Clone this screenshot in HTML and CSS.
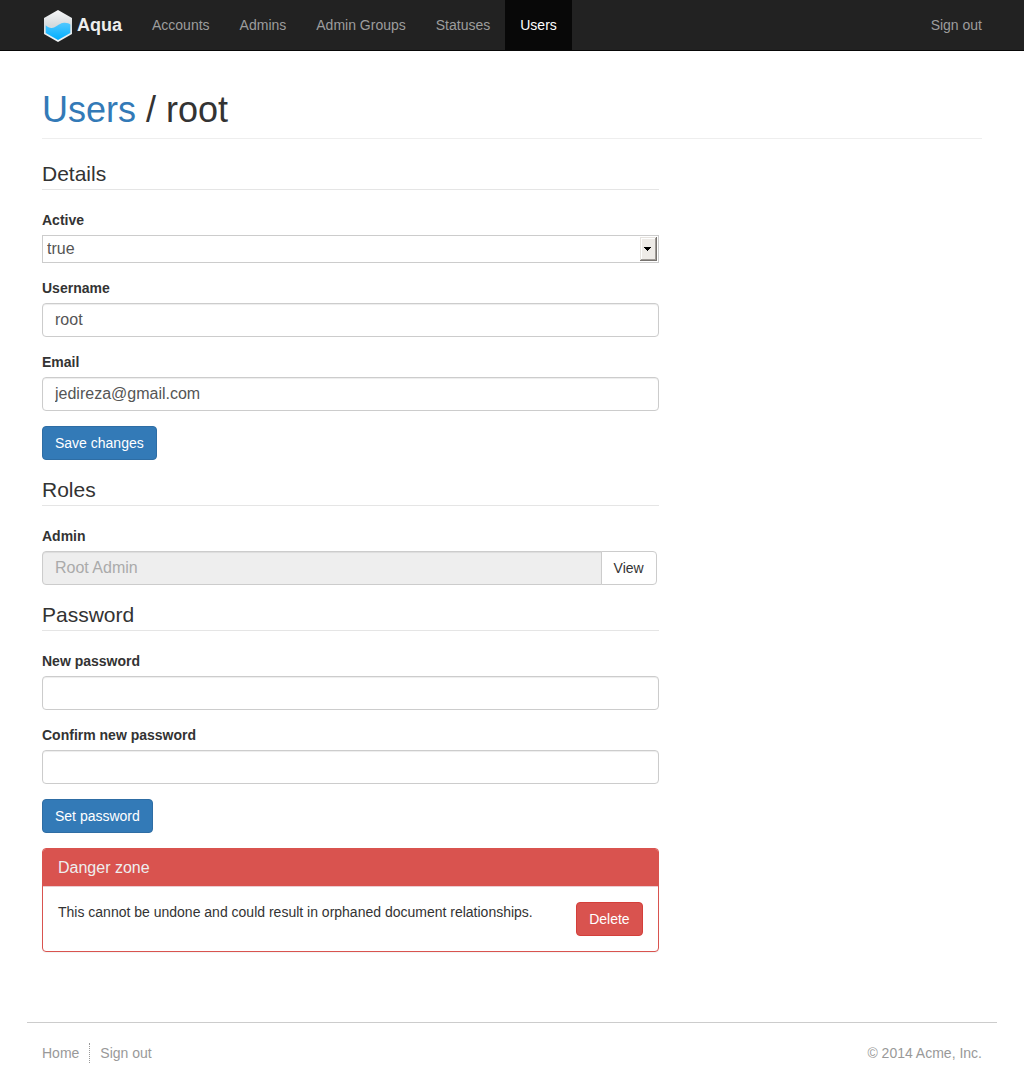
FILE: index.html
```html
<!DOCTYPE html>
<html lang="en">
<head>
<meta charset="utf-8">
<meta name="viewport" content="width=device-width, initial-scale=1">
<title>Users / root</title>
<link rel="stylesheet" href="styles.css">
</head>
<body>
<header class="navbar">
  <nav class="container navbar-inner">
    <a class="brand" href="#">
      <svg class="brand-logo" width="32" height="32" viewBox="0 0 32 32" aria-hidden="true">
        <defs>
          <linearGradient id="shell" x1="0" y1="0" x2="0" y2="1">
            <stop offset="0" stop-color="#f6f7f8"/>
            <stop offset="0.5" stop-color="#d4d9dc"/>
            <stop offset="1" stop-color="#f4f8fa"/>
          </linearGradient>
          <linearGradient id="water" x1="0" y1="0" x2="0" y2="1">
            <stop offset="0" stop-color="#52c8ff"/>
            <stop offset="1" stop-color="#00aeff"/>
          </linearGradient>
        </defs>
        <path fill="url(#shell)" d="M16 0 L30 8 V24 L16 32 L2 24 V8 Z"/>
        <path fill="url(#water)" d="M4 15.500 C6 17.500 9 18.500 12 17.500 C16 16 18 13 22 12.800 C25 12.600 27 13.500 28.300 14.500 V23 L16 30 L3.700 23 V15.500 Z"/>
      </svg>
      <span>Aqua</span>
    </a>
    <ul class="nav">
      <li><a href="#">Accounts</a></li>
      <li><a href="#">Admins</a></li>
      <li><a href="#">Admin Groups</a></li>
      <li><a href="#">Statuses</a></li>
      <li><a class="active" href="#">Users</a></li>
    </ul>
    <a class="nav-signout" href="#">Sign out</a>
  </nav>
</header>

<main class="container">
  <h1 class="page-header"><a href="#">Users</a> / root</h1>
  <div class="row">
    <div class="column">
      <form>
        <fieldset>
          <legend>Details</legend>
          <div class="form-group">
            <label for="active">Active</label>
            <div class="select-wrap">
              <select id="active"><option>true</option><option>false</option></select>
              <svg class="select-arrow" width="17" height="24" viewBox="0 0 17 24" shape-rendering="crispEdges" aria-hidden="true">
                <path fill="#77736f" d="M0 0h17v24H0z"/>
                <path fill="#e6e3df" d="M0 0h16v23H0z"/>
                <path fill="#a09c98" d="M1 1h15v22H1z"/>
                <path fill="#fff" d="M1 1h14v21H1z"/>
                <path fill="#eeebe7" d="M2 2h13v20H2z"/>
                <path fill="#000" d="M4 10h7v1H4zM5 11h5v1H5zM6 12h3v1H6zM7 13h1v1H7z"/>
              </svg>
            </div>
          </div>
          <div class="form-group">
            <label for="username">Username</label>
            <input class="control" id="username" type="text" value="root">
          </div>
          <div class="form-group">
            <label for="email">Email</label>
            <input class="control" id="email" type="text" value="jedireza@gmail.com">
          </div>
          <div class="form-group">
            <button class="btn btn-primary" type="button">Save changes</button>
          </div>
        </fieldset>
      </form>
      <form>
        <fieldset>
          <legend>Roles</legend>
          <div class="form-group">
            <label for="admin">Admin</label>
            <div class="input-group">
              <input class="control" id="admin" type="text" value="Root Admin" disabled>
              <button class="btn btn-default" type="button">View</button>
            </div>
          </div>
        </fieldset>
      </form>
      <form>
        <fieldset>
          <legend>Password</legend>
          <div class="form-group">
            <label for="password">New password</label>
            <input class="control" id="password" type="password">
          </div>
          <div class="form-group">
            <label for="confirm">Confirm new password</label>
            <input class="control" id="confirm" type="password">
          </div>
          <div class="form-group">
            <button class="btn btn-primary" type="button">Set password</button>
          </div>
        </fieldset>
      </form>
      <section class="panel">
        <h2 class="panel-heading">Danger zone</h2>
        <div class="panel-body">
          <p>This cannot be undone and could result in orphaned document relationships.</p>
          <button class="btn btn-danger" type="button">Delete</button>
        </div>
      </section>
    </div>
  </div>
</main>

<footer class="container footer">
  <ul class="footer-links">
    <li><a href="#">Home</a></li>
    <li><a href="#">Sign out</a></li>
  </ul>
  <span>© 2014 Acme, Inc.</span>
</footer>
</body>
</html>
```
FILE: styles.css
```css
* {
  box-sizing: border-box;
}

body {
  margin: 0;
  background: #fff;
  color: #333;
  font: 14px/20px "Liberation Sans", Arial, sans-serif;
}

a {
  color: #337ab7;
  text-decoration: none;
}

ul {
  display: flex;
  margin: 0;
  padding: 0;
  list-style: none;
}

.container {
  max-width: 970px;
  margin: 0 auto;
  padding: 0 15px;
}

/* Top bar */
.navbar {
  background: #222;
  border-bottom: 1px solid #080808;
}

.navbar-inner {
  display: flex;
}

.brand {
  display: flex;
  align-items: center;
  gap: 3px;
  height: 50px;
  padding-right: 15px;
  color: #eee;
  font-size: 18px;
  font-weight: bold;
}

.brand-logo {
  margin-top: 2px;
}

.nav a,
.nav-signout {
  display: block;
  padding: 15px;
  color: #9d9d9d;
}

.nav .active {
  background: #080808;
  color: #fff;
}

.nav-signout {
  margin: 0 -15px 0 auto;
}

/* Page */
.page-header {
  margin: 39px 0 20px;
  padding-bottom: 8px;
  border-bottom: 1px solid #eee;
  font-size: 36px;
  line-height: 40px;
  font-weight: normal;
}

.row {
  display: grid;
  grid-template-columns: 2fr 1fr;
  margin: 0 -15px;
}

.column {
  min-width: 0;
  padding: 0 15px;
}

/* Forms */
fieldset {
  min-width: 0;
  margin: 0;
  padding: 0;
  border: 0;
}

legend {
  width: 100%;
  margin-bottom: 20px;
  padding: 0;
  border-bottom: 1px solid #e5e5e5;
  font-size: 21px;
  line-height: 30px;
}

.form-group {
  margin-bottom: 15px;
}

label {
  display: block;
  margin-bottom: 5px;
  font-weight: bold;
}

.control {
  display: block;
  width: 100%;
  height: 34px;
  padding: 6px 12px;
  border: 1px solid #ccc;
  border-radius: 4px;
  background: #fff;
  box-shadow: inset 0 1px 1px rgba(0, 0, 0, 0.075);
  color: #555;
  font: 16px/20px "Liberation Sans", Arial, sans-serif;
}

.control:disabled {
  background: #eee;
  color: #aaa;
}

.select-wrap {
  position: relative;
}

.select-wrap select {
  display: block;
  width: 100%;
  height: 28px;
  padding: 0 24px 0 4px;
  border: 1px solid #ccc;
  border-radius: 0;
  background: #fff;
  appearance: none;
  color: #555;
  font: 16px/20px "Liberation Sans", Arial, sans-serif;
}

.select-arrow {
  position: absolute;
  top: 2px;
  right: 2px;
  pointer-events: none;
}

.input-group {
  display: flex;
  margin-right: 2px;
}

.input-group .control {
  flex: 1;
  min-width: 0;
  border-radius: 4px 0 0 4px;
}

.input-group .btn {
  margin-left: -1px;
  border-radius: 0 4px 4px 0;
}

.btn {
  display: block;
  flex: none;
  padding: 6px 12px;
  border: 1px solid;
  border-radius: 4px;
  font: 14px/20px "Liberation Sans", Arial, sans-serif;
}

.btn-primary {
  background: #337ab7;
  border-color: #2e6da4;
  color: #fff;
}

.btn-default {
  background: #fff;
  border-color: #ccc;
  color: #333;
}

.btn-danger {
  background: #d9534f;
  border-color: #d43f3a;
  color: #fff;
}

/* Danger zone */
.panel {
  border: 1px solid #d9534f;
  border-radius: 4px;
  box-shadow: 0 1px 1px rgba(0, 0, 0, 0.05);
}

.panel-heading {
  margin: 0;
  padding: 10px 15px 9px;
  border-bottom: 1px solid #ebccd1;
  border-radius: 3px 3px 0 0;
  background: #d9534f;
  color: #eee;
  font-size: 16px;
  line-height: 18px;
  font-weight: normal;
}

.panel-body {
  display: flex;
  justify-content: space-between;
  gap: 15px;
  padding: 15px;
}

.panel-body p {
  margin: 0;
}

/* Footer */
.footer {
  display: flex;
  justify-content: space-between;
  margin-top: 70px;
  padding-top: 20px;
  padding-bottom: 20px;
  border-top: 1px solid #ccc;
  color: #999;
}

.footer a {
  color: #999;
}

.footer-links li + li {
  margin-left: 10px;
  padding-left: 10px;
  border-left: 1px dotted #999;
}
```
